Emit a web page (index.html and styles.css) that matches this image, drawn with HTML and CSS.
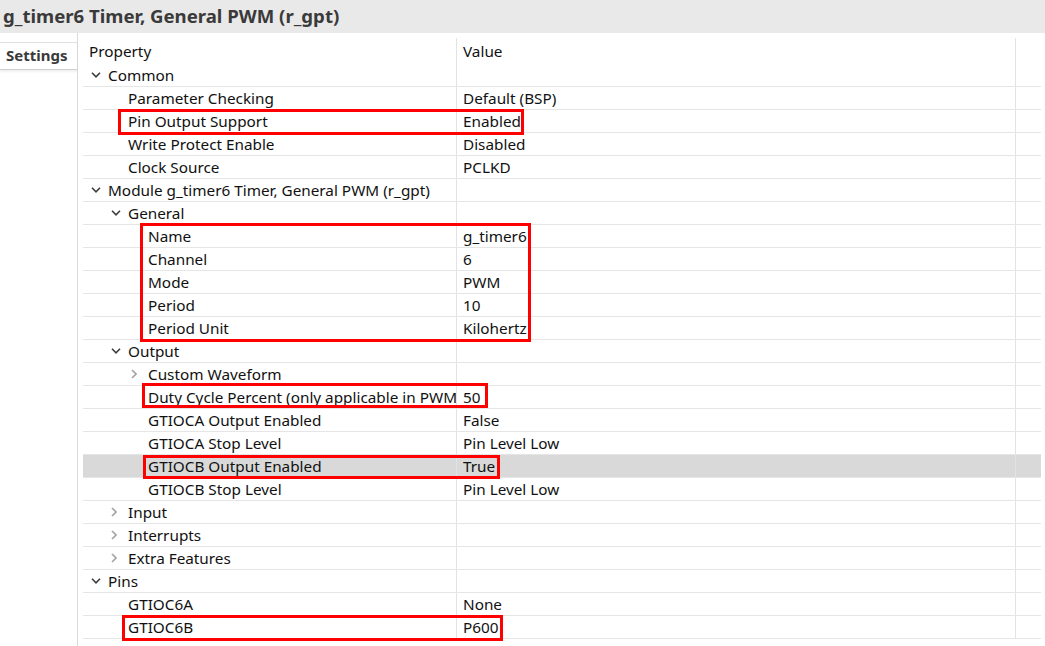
FILE: index.html
```html
<!DOCTYPE html>
<html>
<head>
<meta charset="utf-8">
<link rel="stylesheet" href="styles.css">
</head>
<body>
<div class="titlebar">g_timer6 Timer, General PWM (r_gpt)</div>
<div class="main">
  <div class="sidebar">
    <div class="tab">Settings</div>
  </div>
  <div class="tablewrap">
    <div class="table">
      <div class="row header"><div class="c1"><span class="hdr">Property</span></div><div class="c2">Value</div><div class="c3"></div></div>

      <div class="row"><div class="c1 l0"><span class="tw"><svg width="10" height="6" viewBox="0 0 10 6"><polyline points="1,0.8 5,4.8 9,0.8" class="exp"/></svg></span>Common</div><div class="c2"></div><div class="c3"></div></div>
      <div class="row"><div class="c1 l1 leaf">Parameter Checking</div><div class="c2">Default (BSP)</div><div class="c3"></div></div>
      <div class="row"><div class="c1 l1 leaf">Pin Output Support</div><div class="c2">Enabled</div><div class="c3"></div></div>
      <div class="row"><div class="c1 l1 leaf">Write Protect Enable</div><div class="c2">Disabled</div><div class="c3"></div></div>
      <div class="row"><div class="c1 l1 leaf">Clock Source</div><div class="c2">PCLKD</div><div class="c3"></div></div>
      <div class="row"><div class="c1 l0"><span class="tw"><svg width="10" height="6" viewBox="0 0 10 6"><polyline points="1,0.8 5,4.8 9,0.8" class="exp"/></svg></span>Module g_timer6 Timer, General PWM (r_gpt)</div><div class="c2"></div><div class="c3"></div></div>
      <div class="row"><div class="c1 l1"><span class="tw"><svg width="10" height="6" viewBox="0 0 10 6"><polyline points="1,0.8 5,4.8 9,0.8" class="exp"/></svg></span>General</div><div class="c2"></div><div class="c3"></div></div>
      <div class="row"><div class="c1 l2 leaf">Name</div><div class="c2">g_timer6</div><div class="c3"></div></div>
      <div class="row"><div class="c1 l2 leaf">Channel</div><div class="c2">6</div><div class="c3"></div></div>
      <div class="row"><div class="c1 l2 leaf">Mode</div><div class="c2">PWM</div><div class="c3"></div></div>
      <div class="row"><div class="c1 l2 leaf">Period</div><div class="c2">10</div><div class="c3"></div></div>
      <div class="row"><div class="c1 l2 leaf">Period Unit</div><div class="c2">Kilohertz</div><div class="c3"></div></div>
      <div class="row"><div class="c1 l1"><span class="tw"><svg width="10" height="6" viewBox="0 0 10 6"><polyline points="1,0.8 5,4.8 9,0.8" class="exp"/></svg></span>Output</div><div class="c2"></div><div class="c3"></div></div>
      <div class="row"><div class="c1 l2"><span class="tw"><svg width="6" height="10" viewBox="0 0 6 10"><polyline points="1,1 5,5 1,9" class="col"/></svg></span>Custom Waveform</div><div class="c2"></div><div class="c3"></div></div>
      <div class="row"><div class="c1 l2 leaf">Duty Cycle Percent (only applicable in PWM mode)</div><div class="c2">50</div><div class="c3"></div></div>
      <div class="row"><div class="c1 l2 leaf">GTIOCA Output Enabled</div><div class="c2">False</div><div class="c3"></div></div>
      <div class="row"><div class="c1 l2 leaf">GTIOCA Stop Level</div><div class="c2">Pin Level Low</div><div class="c3"></div></div>
      <div class="row selected"><div class="c1 l2 leaf">GTIOCB Output Enabled</div><div class="c2">True</div><div class="c3"></div></div>
      <div class="row"><div class="c1 l2 leaf">GTIOCB Stop Level</div><div class="c2">Pin Level Low</div><div class="c3"></div></div>
      <div class="row"><div class="c1 l1"><span class="tw"><svg width="6" height="10" viewBox="0 0 6 10"><polyline points="1,1 5,5 1,9" class="col"/></svg></span>Input</div><div class="c2"></div><div class="c3"></div></div>
      <div class="row"><div class="c1 l1"><span class="tw"><svg width="6" height="10" viewBox="0 0 6 10"><polyline points="1,1 5,5 1,9" class="col"/></svg></span>Interrupts</div><div class="c2"></div><div class="c3"></div></div>
      <div class="row"><div class="c1 l1"><span class="tw"><svg width="6" height="10" viewBox="0 0 6 10"><polyline points="1,1 5,5 1,9" class="col"/></svg></span>Extra Features</div><div class="c2"></div><div class="c3"></div></div>
      <div class="row"><div class="c1 l0"><span class="tw"><svg width="10" height="6" viewBox="0 0 10 6"><polyline points="1,0.8 5,4.8 9,0.8" class="exp"/></svg></span>Pins</div><div class="c2"></div><div class="c3"></div></div>
      <div class="row"><div class="c1 l1 leaf">GTIOC6A</div><div class="c2">None</div><div class="c3"></div></div>
      <div class="row"><div class="c1 l1 leaf">GTIOC6B</div><div class="c2">P600</div><div class="c3"></div></div>
    </div>
  </div>
</div>

<div class="mark m-pin"></div>
<div class="mark m-general"></div>
<div class="mark m-duty"></div>
<div class="mark m-gtiocb"></div>
<div class="mark m-pin6b"></div>
</body>
</html>
```

FILE: styles.css
```css
html, body {
  margin: 0;
  padding: 0;
  background: #ffffff;
}
body {
  width: 1045px;
  height: 646px;
  overflow: hidden;
  font-family: "Noto Sans", "Open Sans", sans-serif;
  font-size: 15.3px;
  color: #111111;
  position: relative;
}
.titlebar {
  height: 33px;
  line-height: 32px;
  background: #e9e9e9;
  padding-left: 3px;
  font-size: 18.6px;
  font-weight: bold;
  color: #3a3a3a;
  white-space: nowrap;
}
.main {
  display: flex;
  height: 613px;
}
.sidebar {
  width: 77px;
  flex: none;
  border-right: 1px solid #dadada;
  padding-top: 9px;
}
.tab {
  height: 26px;
  border-top: 1px solid #e0e0e0;
  border-bottom: 1px solid #cfcfcf;
  box-shadow: 0 2px 2px rgba(0,0,0,0.06);
  font-weight: bold;
  font-size: 15px;
  color: #3a3a3a;
  line-height: 25px;
  padding-left: 6px;
}
.tablewrap {
  padding-left: 5px;
  padding-top: 5px;
}
.table {
  width: 958px;
}
.row {
  display: flex;
  height: 23px;
  box-sizing: border-box;
  border-bottom: 1px solid #e6e6e6;
  line-height: 22px;
  white-space: nowrap;
}
.row.header {
  height: 26px;
  line-height: 26px;
  border-bottom: none;
}
.row.selected {
  background: #d9d9d9;
}
.c1, .c2, .c3 {
  box-sizing: border-box;
  flex: none;
  overflow: hidden;
}
.c1 {
  width: 374px;
  border-right: 1px solid #e3e3e3;
  display: flex;
  align-items: center;
}
.c2 {
  width: 559px;
  border-right: 1px solid #e3e3e3;
  padding-left: 6px;
}
.c3 {
  width: 25px;
}
.hdr {
  padding-left: 6px;
}
.tw {
  width: 17px;
  display: inline-flex;
  align-items: center;
  flex: none;
}
.l0 { padding-left: 8px; }
.l1 { padding-left: 28px; }
.l2 { padding-left: 48px; }
.l0.leaf { padding-left: 25px; }
.l1.leaf { padding-left: 45px; }
.l2.leaf { padding-left: 65px; }
.exp {
  fill: none;
  stroke: #3d3d3d;
  stroke-width: 1.6;
}
.col {
  fill: none;
  stroke: #a3a3a3;
  stroke-width: 1.6;
}
.mark {
  position: absolute;
  border: 3px solid #ff0000;
  box-sizing: border-box;
}
.m-pin { left: 118px; top: 109px; width: 406px; height: 26px; }
.m-general { left: 140px; top: 223px; width: 391px; height: 119px; }
.m-duty { left: 142px; top: 383px; width: 346px; height: 25px; }
.m-gtiocb { left: 143px; top: 455px; width: 357px; height: 24px; }
.m-pin6b { left: 122px; top: 615px; width: 381px; height: 26px; }
```
